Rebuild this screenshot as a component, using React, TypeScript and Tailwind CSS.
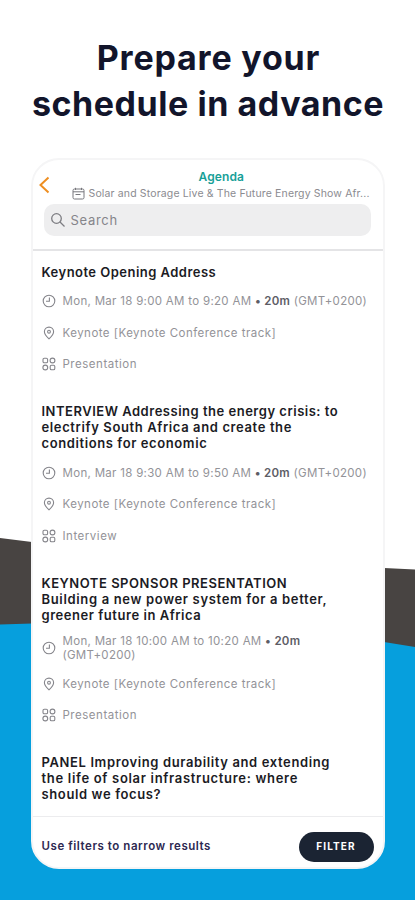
import type { ReactNode } from 'react';

type Session = {
  title: { text: string; tracking: string }[];
  date?: string;
  wrap?: boolean;
  kind?: string;
};

const sessions: Session[] = [
  {
    title: [{ text: 'Keynote Opening Address', tracking: 'tracking-[0.47px]' }],
    date: 'Mon, Mar 18 9:00 AM to 9:20 AM',
    kind: 'Presentation',
  },
  {
    title: [
      { text: 'INTERVIEW Addressing the energy crisis: to', tracking: 'tracking-[0.51px]' },
      { text: 'electrify South Africa and create the', tracking: 'tracking-[0.62px]' },
      { text: 'conditions for economic', tracking: 'tracking-[0.6px]' },
    ],
    date: 'Mon, Mar 18 9:30 AM to 9:50 AM',
    kind: 'Interview',
  },
  {
    title: [
      { text: 'KEYNOTE SPONSOR PRESENTATION', tracking: 'tracking-[0.52px]' },
      { text: 'Building a new power system for a better,', tracking: 'tracking-[0.66px]' },
      { text: 'greener future in Africa', tracking: 'tracking-[0.54px]' },
    ],
    date: 'Mon, Mar 18 10:00 AM to 10:20 AM',
    wrap: true,
    kind: 'Presentation',
  },
  {
    title: [
      { text: 'PANEL Improving durability and extending', tracking: 'tracking-[0.62px]' },
      { text: 'the life of solar infrastructure: where', tracking: 'tracking-[0.69px]' },
      { text: 'should we focus?', tracking: 'tracking-[0.62px]' },
    ],
  },
];

function ClockIcon() {
  return (
    <svg viewBox="0 0 14 14" className="h-[14px] w-[14px]" fill="none" stroke="#85858b" strokeWidth="1.1">
      <circle cx="7" cy="7" r="5.8" />
      <path d="M7.4 3.6V7.200H4" />
    </svg>
  );
}

function PinIcon() {
  return (
    <svg viewBox="0 0 14 14" className="h-[14px] w-[14px]" fill="none" stroke="#85858b" strokeWidth="1.1">
      <path d="M7 12.800C4.900 10.800 2.400 8.700 2.400 5.700a4.600 4.600 0 0 1 9.200 0C11.600 8.700 9.100 10.800 7 12.800z" />
      <circle cx="7" cy="5.700" r="1.400" />
    </svg>
  );
}

function GridIcon() {
  return (
    <svg viewBox="0 0 14 14" className="h-[14px] w-[14px]" fill="none" stroke="#85858b" strokeWidth="1.1">
      <rect x="1" y="1.200" width="4.600" height="4.600" rx="1.300" />
      <circle cx="10.500" cy="3.500" r="2.400" />
      <circle cx="3.300" cy="10.500" r="2.400" />
      <rect x="8.200" y="8.200" width="4.600" height="4.600" rx="1.300" />
    </svg>
  );
}

function Row({ icon, tight, children }: { icon: ReactNode; tight?: boolean; children: ReactNode }) {
  return (
    <div className={`flex items-center gap-[7px] text-[11.5px] leading-[14px] text-[#939398] ${tight ? '-my-[3px]' : ''}`}>
      {icon}
      <div className="whitespace-nowrap">{children}</div>
    </div>
  );
}

function SessionItem({ session }: { session: Session }) {
  return (
    <li className="pb-[32px]">
      <h2 className="text-[13px] leading-[16px] font-semibold text-[#1b1b24]">
        {session.title.map((line) => (
          <span key={line.text} className={`block whitespace-nowrap ${line.tracking}`}>
            {line.text}
          </span>
        ))}
      </h2>
      {session.kind && (
        <div className="mt-[14.5px] flex flex-col gap-[17.5px]">
          <Row icon={<ClockIcon />} tight={session.wrap}>
            <span className="tracking-[0.3px]">
              {session.date} <b className="font-semibold text-[#5d5d66]">• 20m</b>
              {session.wrap ? <br /> : ' '}
              (GMT+0200)
            </span>
          </Row>
          <Row icon={<PinIcon />}>
            <span className="tracking-[0.47px]">Keynote [Keynote Conference track]</span>
          </Row>
          <Row icon={<GridIcon />}>
            <span className="tracking-[0.52px]">{session.kind}</span>
          </Row>
        </div>
      )}
    </li>
  );
}

export default function App() {
  return (
    <div className="relative h-[900px] w-[415px] overflow-hidden bg-white font-['Inter',sans-serif]">
      <svg viewBox="0 0 415 900" className="absolute inset-0 h-full w-full">
        <path d="M0 538L32 542V660H384V568L415 569.500V900H0z" fill="#484442" />
        <path d="M0 624.500L32 623.500L384 642L415 647V900H0z" fill="#069fdd" />
      </svg>

      <div className="relative flex h-full flex-col items-center">
        <h1 className="h-[158px] pt-[35px] text-center text-[34px] leading-[46px] font-bold text-[#12152b]">
          <span className="block pl-[2px] tracking-[0.8px]">Prepare your</span>
          <span className="block pl-[1px] tracking-[0.55px]">schedule in advance</span>
        </h1>

        <main className="flex h-[711px] w-[354px] flex-col overflow-hidden rounded-[28px] border-2 border-[#f5f5f6] bg-white">
          <header className="h-[91px] shrink-0 border-b-2 border-[#e4e4e6]">
            <div className="flex h-[44px]">
              <svg viewBox="0 0 12 18" className="mt-[16px] ml-[5px] h-[18px] w-[12px]" fill="none" stroke="#ee8f22" strokeWidth="2">
                <path d="M10.500 1.500L2.500 9L10.500 16.500" />
              </svg>
              <div className="ml-[22px] flex flex-col pt-[9px]">
                <p className="ml-[127px] text-[12px] leading-[15px] font-semibold tracking-[0.1px] text-[#17a098]">Agenda</p>
                <div className="mt-[3px] flex items-center gap-[4px]">
                  <svg viewBox="0 0 13 13" className="h-[13px] w-[13px]" fill="none" stroke="#77777c" strokeWidth="1">
                    <rect x="1" y="2" width="11" height="10" rx="1.500" />
                    <path d="M1 4.800H12M3.500 0.800V3M9.500 0.800V3M3.500 7.500H8.500" />
                  </svg>
                  <p className="text-[10.5px] leading-[13px] tracking-[0.15px] whitespace-nowrap text-[#8b8b90]">
                    Solar and Storage Live &amp; The Future Energy Show Afr...
                  </p>
                </div>
              </div>
            </div>
            <div className="ml-[11px] flex h-[32px] w-[327px] items-center gap-[5px] rounded-[10px] bg-[#eeeeef] pl-[6px]">
              <svg viewBox="0 0 16 16" className="h-[16px] w-[16px]" fill="none" stroke="#7d7d82" strokeWidth="1.300">
                <circle cx="6.500" cy="6.500" r="4.800" />
                <path d="M10 10L14.500 14.500" />
              </svg>
              <span className="pt-[1px] text-[13px] tracking-[0.7px] text-[#85858a]">Search</span>
            </div>
          </header>

          <ul className="min-h-0 flex-1 overflow-hidden pt-[12.5px] pl-[9px]">
            {sessions.map((session) => (
              <SessionItem key={session.title[0].text} session={session} />
            ))}
          </ul>

          <footer className="flex h-[51px] shrink-0 items-center justify-between border-t border-[#ececee] px-[9px] pt-[9px]">
            <p className="text-[11.5px] font-semibold tracking-[0.55px] text-[#2d2952]">Use filters to narrow results</p>
            <button className="h-[30px] w-[75px] rounded-full bg-[#1b2433] text-[10px] font-bold tracking-[1.1px] text-white">
              FILTER
            </button>
          </footer>
        </main>
      </div>
    </div>
  );
}
